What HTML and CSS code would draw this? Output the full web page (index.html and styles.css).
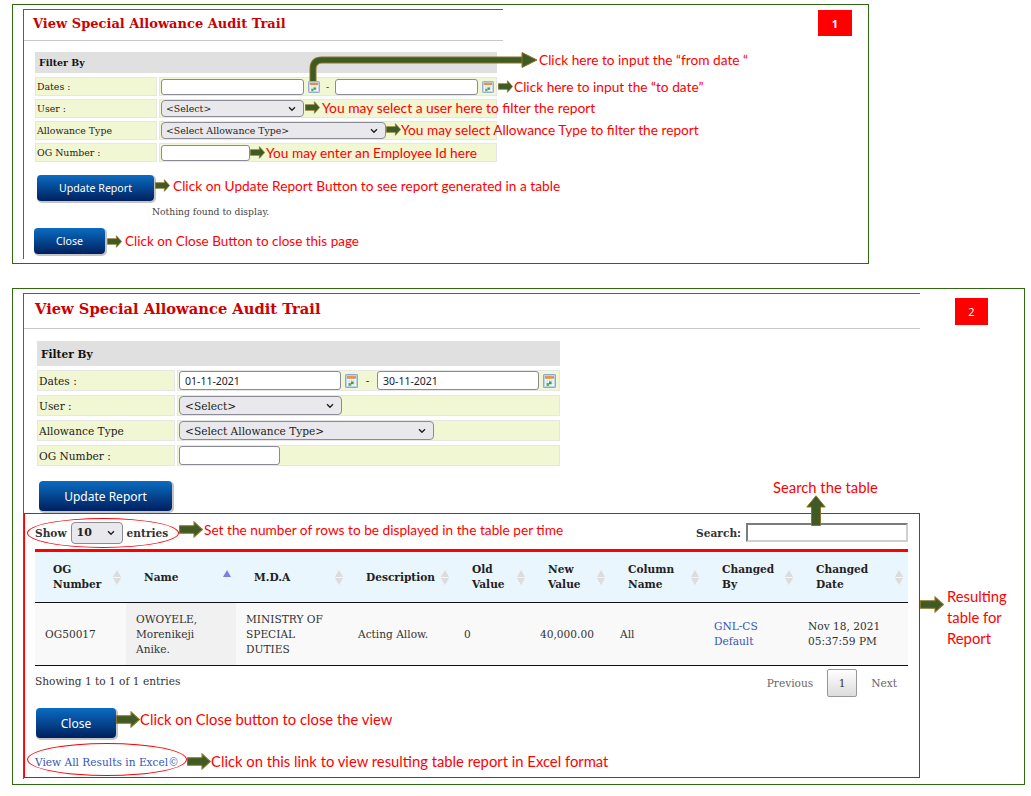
FILE: index.html
```html
<!DOCTYPE html>
<html>
  <head>
    <title>View Special Allowance Audit Trail</title>
    <meta name="viewport" content="width=device-width, initial-scale=1.0">
    <link rel="stylesheet" href="styles.css">
  </head>
  <body>
    <svg class="defs" width="0" height="0">
      <symbol id="arrow" viewBox="0 0 24 16" preserveAspectRatio="none">
        <polygon points="0.5,4.5 15,4.5 15,0.8 23.4,8 15,15.2 15,11.5 0.5,11.5" fill="#3f5a24" stroke="#8d7426"/>
      </symbol>
      <symbol id="cal" viewBox="0 0 13 13" preserveAspectRatio="none">
        <rect x="0.5" y="0.5" width="12" height="12" rx="1" fill="#bcd3ec" stroke="#8aa9cf"/>
        <rect x="2" y="2" width="9" height="2.5" fill="#ee8d3e"/>
        <rect x="2" y="4.5" width="9" height="6.5" fill="#fff"/>
        <path d="M2 6.5 H11 M2 8.5 H11 M4.2 4.5 V11 M6.5 4.5 V11 M8.8 4.5 V11" stroke="#b6c8dc" stroke-width="0.5"/>
        <rect x="6" y="7" width="2.5" height="2.5" fill="#3f9a3c"/>
        <rect x="3.5" y="8.5" width="2.5" height="2.5" fill="#5aa858"/>
      </symbol>
    </svg>

    <section class="frame frame-one">
      <div class="panel panel-one">
        <h1 class="title">View Special Allowance Audit Trail</h1>
        <div class="filter">
          <div class="filter-head">Filter By</div>
          <div class="cell">Dates :</div>
          <div class="cell cell-value">
            <input class="field field-date" type="text">
            <svg class="cal"><use href="#cal"/></svg>
            <span class="dash">-</span>
            <input class="field field-date" type="text">
            <svg class="cal"><use href="#cal"/></svg>
          </div>
          <div class="cell">User :</div>
          <div class="cell cell-value">
            <select class="pick pick-user"><option>&lt;Select&gt;</option></select>
          </div>
          <div class="cell">Allowance Type</div>
          <div class="cell cell-value">
            <select class="pick pick-type"><option>&lt;Select Allowance Type&gt;</option></select>
          </div>
          <div class="cell">OG Number :</div>
          <div class="cell cell-value">
            <input class="field field-og" type="text">
          </div>
        </div>
        <button class="btn btn-update">Update Report</button>
        <p class="empty">Nothing found to display.</p>
        <button class="btn btn-close">Close</button>
      </div>
    </section>

    <section class="frame frame-two">
      <div class="panel panel-two">
        <h1 class="title">View Special Allowance Audit Trail</h1>
        <div class="filter">
          <div class="filter-head">Filter By</div>
          <div class="cell">Dates :</div>
          <div class="cell cell-value">
            <input class="field field-date" type="text" value="01-11-2021">
            <svg class="cal"><use href="#cal"/></svg>
            <span class="dash">-</span>
            <input class="field field-date" type="text" value="30-11-2021">
            <svg class="cal"><use href="#cal"/></svg>
          </div>
          <div class="cell">User :</div>
          <div class="cell cell-value">
            <select class="pick pick-user"><option>&lt;Select&gt;</option></select>
          </div>
          <div class="cell">Allowance Type</div>
          <div class="cell cell-value">
            <select class="pick pick-type"><option>&lt;Select Allowance Type&gt;</option></select>
          </div>
          <div class="cell">OG Number :</div>
          <div class="cell cell-value">
            <input class="field field-og" type="text">
          </div>
        </div>
        <button class="btn btn-update">Update Report</button>

        <div class="results">
          <div class="table-top">
            <label class="length">Show
              <select class="pick pick-length"><option>10</option></select>
              entries</label>
            <label class="search">Search: <input class="search-box" type="text"></label>
          </div>
          <table class="report">
            <thead>
              <tr>
                <th class="col-og sort">OG Number</th>
                <th class="col-name sort-asc">Name</th>
                <th class="col-mda sort">M.D.A</th>
                <th class="col-desc sort">Description</th>
                <th class="col-old sort">Old Value</th>
                <th class="col-new sort">New Value</th>
                <th class="col-column sort">Column Name</th>
                <th class="col-by sort">Changed By</th>
                <th class="col-date sort">Changed Date</th>
              </tr>
            </thead>
            <tbody>
              <tr>
                <td>OG50017</td>
                <td class="sorted">OWOYELE, Morenikeji Anike.</td>
                <td>MINISTRY OF SPECIAL DUTIES</td>
                <td>Acting Allow.</td>
                <td>0</td>
                <td>40,000.00</td>
                <td>All</td>
                <td><a href="#">GNL-CS Default</a></td>
                <td>Nov 18, 2021 05:37:59 PM</td>
              </tr>
            </tbody>
          </table>
          <div class="table-foot">
            <span>Showing 1 to 1 of 1 entries</span>
            <div class="pager">
              <span>Previous</span>
              <span class="page-current">1</span>
              <span>Next</span>
            </div>
          </div>
          <button class="btn btn-close">Close</button>
          <a class="excel" href="#">View All Results in Excel©</a>
        </div>
      </div>
    </section>

    <div class="badge badge-one">1</div>
    <div class="badge badge-two">2</div>

    <svg class="elbow" width="245" height="40" viewBox="0 0 245 40">
      <path d="M13 32 V20 Q13 11 22 11 H224" fill="none" stroke="#8d7426" stroke-width="7"/>
      <path d="M13 32 V20 Q13 11 22 11 H226" fill="none" stroke="#3f5a24" stroke-width="5"/>
      <polygon points="222,3.5 237,11 222,18.5" fill="#3f5a24" stroke="#8d7426"/>
    </svg>
    <div class="note note-from">Click here to input the “from date “</div>

    <div class="note note-to"><svg class="arrow"><use href="#arrow"/></svg>Click here to input the “to date”</div>
    <div class="note note-user"><svg class="arrow"><use href="#arrow"/></svg>You may select a user here to filter the report</div>
    <div class="note note-type"><svg class="arrow"><use href="#arrow"/></svg>You may select Allowance Type to filter the report</div>
    <div class="note note-og"><svg class="arrow"><use href="#arrow"/></svg>You may enter an Employee Id here</div>
    <div class="note note-update"><svg class="arrow"><use href="#arrow"/></svg>Click on Update Report Button to see report generated in a table</div>
    <div class="note note-close"><svg class="arrow"><use href="#arrow"/></svg>Click on Close Button to close this page</div>

    <div class="note note-rows"><svg class="arrow arrow-big"><use href="#arrow"/></svg>Set the number of rows to be displayed in the table per time</div>
    <div class="note note-large note-search">Search the table</div>
    <svg class="arrow-up" width="20" height="31" viewBox="0 0 20 31">
      <polygon points="5.5,30.5 5.5,12 0.8,12 10,0.8 19.2,12 14.5,12 14.5,30.5" fill="#3f5a24" stroke="#8d7426"/>
    </svg>
    <div class="note note-large note-result"><svg class="arrow arrow-big"><use href="#arrow"/></svg>Resulting<br>table for<br>Report</div>
    <div class="note note-large note-view"><svg class="arrow arrow-big"><use href="#arrow"/></svg>Click on Close button to close the view</div>
    <div class="note note-large note-link"><svg class="arrow arrow-big"><use href="#arrow"/></svg>Click on this link to view resulting table report in Excel format</div>

    <div class="ring ring-show"></div>
    <div class="ring ring-link"></div>
  </body>
</html>
```

FILE: styles.css
```css
* {
  margin: 0;
  padding: 0;
  box-sizing: border-box;
}
html,
body {
  width: 100%;
  height: 100%;
}
body {
  position: relative;
  padding: 4px 0 0 12px;
  background: white;
  font-family: "DejaVu Serif", serif;
  color: #333;
  overflow: hidden;
}
.defs {
  position: absolute;
}
.frame {
  border: 1px solid #2f6a10;
  padding: 4px 0 0 10px;
}
.frame-one {
  width: 857px;
  height: 260px;
}
.frame-two {
  width: 1013px;
  height: 497px;
  margin-top: 24px;
  border-color: #2f6a10;
}
.panel {
  border-left: 1px solid #157a7a;
  border-top: 1px solid #157a7a;
}
.panel-one {
  width: 480px;
  height: 250px;
}
.panel-two {
  width: 897px;
  height: 486px;
}
.title {
  color: #c00;
  font-weight: bold;
  border-bottom: 1px solid #c8c8c8;
}
.panel-one .title {
  font-size: 13px;
  height: 31px;
  line-height: 27px;
  padding-left: 9px;
}
.panel-two .title {
  font-size: 14.7px;
  height: 35px;
  line-height: 30px;
  padding-left: 11px;
}

/* filter table */
.filter {
  display: grid;
}
.panel-one .filter {
  grid-template-columns: 122px 338px;
  grid-template-rows: 22px repeat(4, 19px);
  gap: 3px 2px;
  margin: 11px 0 0 11px;
  font-size: 9.4px;
}
.panel-two .filter {
  grid-template-columns: 138px 383px;
  grid-template-rows: 25px repeat(4, 21px);
  gap: 4px 2px;
  margin: 12px 0 0 13px;
  font-size: 10.6px;
}
.filter-head {
  grid-column: 1 / 3;
  background: #e0e0e0;
  color: #111;
  font-weight: bold;
  display: flex;
  align-items: center;
  padding-left: 4px;
}
.panel-one .filter-head {
  margin-bottom: 1px;
}
.cell {
  background: #f1f6d3;
  border: 1px solid #e6e6e6;
  color: #222;
  display: flex;
  align-items: center;
  padding-left: 1px;
}
.cell-value {
  padding-left: 1px;
}
.field {
  background: white;
  border: 1px solid #8b8b95;
  border-radius: 3px;
  font-family: "Noto Sans", sans-serif;
  color: #222;
}
.panel-one .field {
  height: 16px;
}
.panel-two .field {
  height: 19px;
  font-size: 10.5px;
  padding-left: 5px;
}
.panel-one .field-date {
  width: 143px;
}
.panel-two .field-date {
  width: 162px;
}
.panel-one .field-og {
  width: 89px;
}
.panel-two .field-og {
  width: 101px;
}
.cal {
  flex: none;
}
.panel-one .cal {
  width: 12px;
  height: 12px;
  margin-left: 4px;
}
.panel-two .cal {
  width: 13px;
  height: 14px;
  margin-left: 4px;
}
.dash {
  text-align: center;
  color: #222;
}
.panel-one .dash {
  width: 15px;
}
.panel-two .dash {
  width: 19px;
}
.pick {
  appearance: none;
  background: #e9e9ed url("data:image/svg+xml,%3Csvg xmlns='http://www.w3.org/2000/svg' width='8' height='6'%3E%3Cpath d='M1 1.2 L4 4.2 L7 1.2' fill='none' stroke='%23222' stroke-width='1.4'/%3E%3C/svg%3E") no-repeat right 7px center;
  border: 1px solid #8b8b95;
  border-radius: 4px;
  font-family: "DejaVu Serif", serif;
  color: #222;
}
.panel-one .pick {
  height: 17px;
  font-size: 9.4px;
  padding-left: 4px;
}
.panel-two .pick {
  height: 19px;
  font-size: 10.6px;
  padding-left: 5px;
}
.panel-one .pick-user {
  width: 143px;
}
.panel-one .pick-type {
  width: 225px;
}
.panel-two .pick-user {
  width: 163px;
}
.panel-two .pick-type {
  width: 255px;
}

/* buttons */
.btn {
  display: block;
  border: 0;
  border-radius: 4px;
  background: linear-gradient(#0a6cc2, #00205e);
  color: white;
  font-family: "Noto Sans", sans-serif;
  box-shadow: 1px 1px 0 1px #c4c4c4;
}
.panel-one .btn {
  font-size: 10.6px;
}
.panel-one .btn-update {
  width: 117px;
  height: 26px;
  margin: 13px 0 0 13px;
}
.panel-one .btn-close {
  width: 71px;
  height: 26px;
  margin: 11px 0 0 10px;
}
.empty {
  font-size: 9.2px;
  margin: 5px 0 0 128px;
  line-height: 11px;
  color: #444;
}
.panel-two .btn {
  font-size: 12px;
}
.panel-two .btn-update {
  width: 133px;
  height: 30px;
  margin: 15px 0 0 15px;
}

/* results */
.results {
  width: 896px;
  height: 265px;
  margin-top: 2px;
  border: 1px solid #f00;
  padding: 0 11px 0 10px;
  font-size: 10.6px;
}
.table-top {
  height: 35px;
  display: flex;
  justify-content: space-between;
  align-items: center;
  padding-top: 2px;
  font-weight: bold;
}
.length {
  display: flex;
  align-items: center;
  gap: 4px;
}
.panel-two .pick-length {
  width: 52px;
  height: 22px;
  font-size: 11px;
  font-weight: bold;
  padding-left: 5px;
}
.search {
  display: flex;
  align-items: center;
  gap: 5px;
}
.search-box {
  width: 162px;
  height: 19px;
  border: 2px inset #d0d0d0;
  background: white;
}
.report {
  width: 873px;
  table-layout: fixed;
  border-collapse: collapse;
  border-top: 3px solid #f00;
  border-bottom: 1px solid #111;
}
.report th {
  position: relative;
  height: 52px;
  padding: 0 18px;
  background: #eaf6fd;
  border-bottom: 1px solid #111;
  color: #222;
  text-align: left;
  line-height: 15px;
  font-weight: bold;
  font-size: 10.6px;
}
.report td {
  height: 63px;
  padding: 0 10px;
  background: #f9f9f9;
  line-height: 15px;
  color: #333;
}
.report td.sorted {
  background: #f1f1f1;
}
.report a,
.excel {
  color: #3655b8;
  text-decoration: none;
}
.col-og { width: 91px; }
.col-name { width: 110px; }
.col-mda { width: 112px; }
.col-desc { width: 106px; }
.col-old { width: 76px; }
.col-new { width: 80px; }
.col-column { width: 94px; }
.col-by { width: 94px; }
.col-date { width: 110px; }
.col-desc {
  padding-right: 0 !important;
}
.sort::before,
.sort::after,
.sort-asc::before {
  content: "";
  position: absolute;
  right: 5px;
  width: 0;
  height: 0;
  border-left: 4px solid transparent;
  border-right: 4px solid transparent;
}
.sort::before {
  top: 18px;
  border-bottom: 7px solid #dcdcdc;
}
.sort::after {
  top: 26px;
  border-top: 7px solid #dcdcdc;
}
.sort-asc::before {
  top: 18px;
  border-bottom: 7px solid #7b7fdd;
}
.table-foot {
  height: 42px;
  display: flex;
  justify-content: space-between;
  align-items: flex-start;
  padding-top: 9px;
  color: #333;
}
.pager {
  display: flex;
  align-items: center;
  gap: 14px;
  margin-top: -6px;
  padding-right: 11px;
  color: #666;
}
.page-current {
  width: 30px;
  height: 28px;
  display: flex;
  align-items: center;
  justify-content: center;
  background: linear-gradient(#fff, #dcdcdc);
  border: 1px solid #979797;
  border-radius: 2px;
  color: #333;
}
.results .btn-close {
  width: 80px;
  height: 30px;
  margin-left: 1px;
}
.excel {
  display: block;
  margin-top: 18px;
  font-size: 10.6px;
}

/* annotations laid over the screenshot */
.badge {
  position: absolute;
  display: flex;
  align-items: center;
  justify-content: center;
  background: #f00;
  color: white;
  font-family: "Noto Sans", sans-serif;
  font-size: 11px;
  font-weight: bold;
}
.badge-one {
  left: 818px;
  top: 10px;
  width: 34px;
  height: 26px;
}
.badge-two {
  left: 955px;
  top: 298px;
  width: 33px;
  height: 27px;
  font-weight: normal;
}
.note {
  position: absolute;
  display: flex;
  align-items: center;
  gap: 1px;
  color: #f00;
  font-family: Lato, sans-serif;
  font-size: 13.7px;
  line-height: 21px;
  white-space: nowrap;
}
.note-large {
  font-size: 14.8px;
}
.arrow {
  width: 15px;
  height: 13px;
  flex: none;
}
.arrow-big {
  width: 24px;
  height: 17px;
  margin-right: -1px;
}
.elbow {
  position: absolute;
  left: 300px;
  top: 49px;
}
.arrow-up {
  position: absolute;
  left: 806px;
  top: 495px;
}
.note-from { left: 539px; top: 49px; }
.note-to { left: 498px; top: 76px; }
.note-user { left: 305px; top: 97px; font-size: 13.85px; gap: 2px; }
.note-type { left: 386px; top: 119px; gap: 0; }
.note-og { left: 250px; top: 142px; }
.note-update { left: 155px; top: 175px; gap: 3px; }
.note-close { left: 107px; top: 231px; font-size: 13.5px; gap: 3px; }
.note-rows { left: 179px; top: 519px; gap: 2px; }
.note-search { left: 773px; top: 477px; }
.note-view { left: 116px; top: 709px; }
.note-link { left: 187px; top: 751px; }
.note-result {
  display: block;
  left: 920px;
  top: 586px;
  padding-left: 27px;
}
.note-result .arrow {
  position: absolute;
  left: 0;
  top: 10px;
}
.ring {
  position: absolute;
  border: 1px solid #f00;
  border-radius: 50%;
}
.ring-show {
  left: 27px;
  top: 518px;
  width: 152px;
  height: 30px;
}
.ring-link {
  left: 27px;
  top: 743px;
  width: 160px;
  height: 33px;
}
```
